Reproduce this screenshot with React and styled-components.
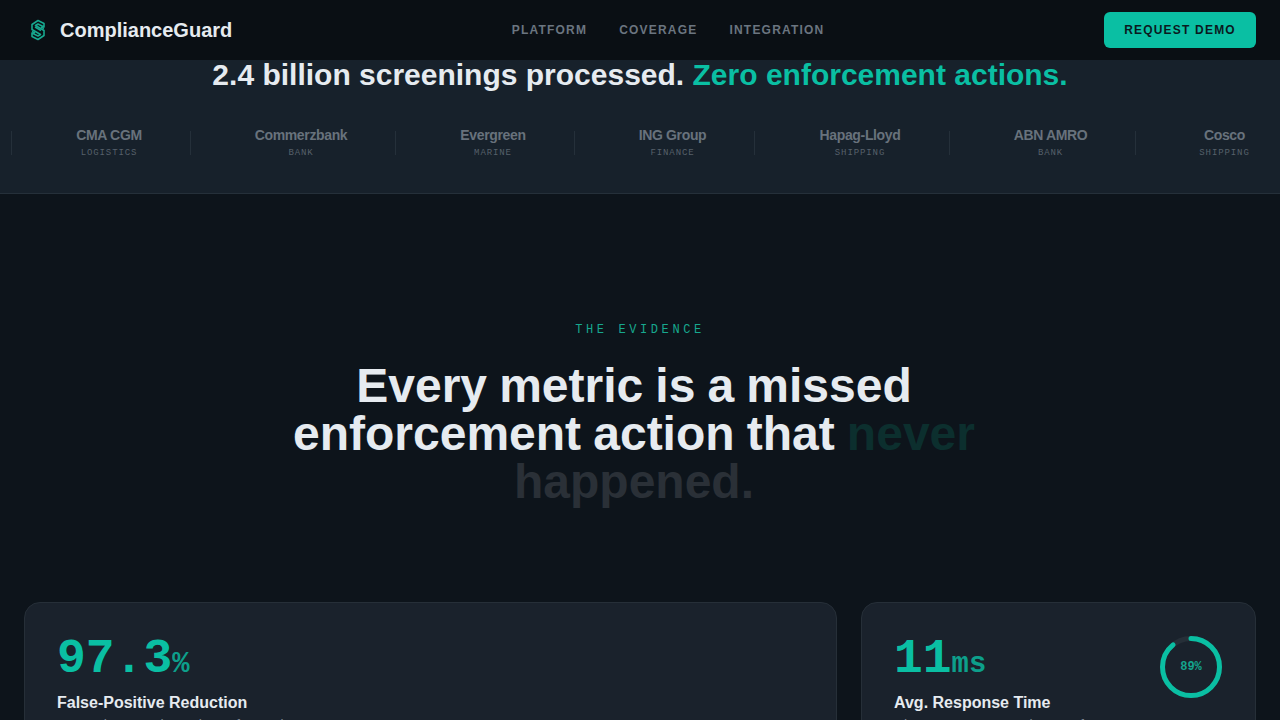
import React from "react";
import styled, { createGlobalStyle } from "styled-components";

const Global = createGlobalStyle`
  html, body { margin: 0; padding: 0; background: #0d141b; overflow: hidden; }
  body { font-family: "Liberation Sans", Arial, sans-serif; }
  * { box-sizing: border-box; }
`;
const Page = styled.div`
  width: 1280px; height: 720px; overflow: hidden; display: flex; flex-direction: column;
  background: #0d141b;
`;
const Nav = styled.header`
  flex: none; height: 60px; display: flex; justify-content: space-between; align-items: center;
  padding: 0 24px; background: #0a0f14;
`;
const Brand = styled.div`
  display: flex; align-items: center; gap: 12px; padding-left: 4px;
  font-size: 20px; font-weight: 700; color: #e6ebf0;
`;
const Links = styled.nav`
  display: flex; gap: 32px;
`;
const NavLink = styled.a`
  font-size: 12px; font-weight: 700; letter-spacing: 1.2px; color: #6b7580;
`;
const Demo = styled.button`
  height: 36px; width: 152px; border: 0; border-radius: 6px; background: #0abfa3;
  font: 700 12px "Liberation Sans", Arial, sans-serif; letter-spacing: 1.2px; color: #0a1a1f;
`;
const Band = styled.section`
  flex: none; height: 134px; background: #17212b; border-bottom: 1px solid #25303a;
  overflow: hidden;
`;
const BandTitle = styled.h2`
  margin: 0; font-size: 30px; line-height: 30px; font-weight: 700; text-align: center; color: #e6ebf0;
`;
const Accent = styled.span`
  color: #0abfa3;
`;
const Ticker = styled.div`
  display: flex; margin-top: 41px; padding-left: 11px;
`;
const Client = styled.div`
  flex: none; width: ${p => p.$w}px; height: 24px; padding-left: 16px;
  border-left: 1px solid #25303a;
  display: flex; flex-direction: column; align-items: center;
`;
const ClientName = styled.span`
  font-size: 14px; line-height: 17px; margin-top: -4px; font-weight: 700; letter-spacing: -0.35px; color: #68727c; white-space: nowrap;
`;
const ClientType = styled.span`
  font-family: "Liberation Mono", monospace; font-size: 9px; line-height: 10px; margin-top: 4px; letter-spacing: 0.9px; color: #56606a; white-space: nowrap;
`;
const Evidence = styled.section`
  flex: none; height: 408px; display: flex; flex-direction: column; align-items: center;
  padding-top: 129px;
`;
const Eyebrow = styled.div`
  font-family: "Liberation Mono", monospace; font-size: 12px; line-height: 14px; letter-spacing: 3.6px; color: #17a88f;
`;
const Heading = styled.h1`
  margin: 25px 12px 0 0; width: 700px; font-size: 48px; line-height: 48px; font-weight: 700; text-align: center;
  word-spacing: -1.2px; color: #e6ebf0;
`;
const Never = styled.span`
  color: #0c2f2e;
`;
const Happened = styled.span`
  color: #2a3037;
`;
const Cards = styled.div`
  flex: none; display: grid; grid-template-columns: 813px 395px; gap: 24px; padding: 0 24px;
`;
const Card = styled.article`
  position: relative; height: 200px; padding: 32px; border-radius: 16px; background: #1a222c;
  border: 1px solid #262f38;
`;
const Value = styled.div`
  font-family: "Liberation Mono", monospace; font-weight: 700; font-size: 48px; line-height: 48px; color: #0abfa3;
`;
const Unit = styled.span`
  font-size: 28.8px; font-weight: 700; opacity: 0.8;
`;
const CardTitle = styled.div`
  margin-top: 2px; font-size: 16px; line-height: 24px; font-weight: 700; color: #e6ebf0;
`;
const CardText = styled.div`
  font-size: 14px; line-height: 21px; color: #7d8792;
`;
const Ring = styled.div`
  position: absolute; top: 32px; right: 32px; width: 64px; height: 64px;
  display: flex; align-items: center; justify-content: center;
`;
const RingLabel = styled.span`
  font-family: "Liberation Mono", monospace; font-size: 12px; font-weight: 700; color: #14a48d;
`;
const RingSvg = styled.svg`
  position: absolute; inset: 0; transform: rotate(-90deg);
`;

const clients = [
  ["CMA CGM", "LOGISTICS", 179],
  ["Commerzbank", "BANK", 205],
  ["Evergreen", "MARINE", 179],
  ["ING Group", "FINANCE", 180],
  ["Hapag-Lloyd", "SHIPPING", 195],
  ["ABN AMRO", "BANK", 186],
  ["Cosco", "SHIPPING", 162],
];

const Logo = () => (
  <svg width="20" height="24" viewBox="0 0 20 24" fill="none" stroke="#17a88f" strokeWidth="1.6" strokeLinejoin="round">
    <path d="M4 6.5 10 2.5l6 3v3.5L10 6 7.5 7.5l8.5 5v5L10 21.5l-6-3V15l6 3 2.5-1.5L4 11.500z" />
    <path d="M7 9l6 3.500M7 15l-3-1.500M13 9l3 1.500" />
  </svg>
);

export default function App() {
  return (
    <Page>
      <Global />
      <Nav>
        <Brand><Logo />ComplianceGuard</Brand>
        <Links>
          <NavLink>PLATFORM</NavLink>
          <NavLink>COVERAGE</NavLink>
          <NavLink>INTEGRATION</NavLink>
        </Links>
        <Demo>REQUEST DEMO</Demo>
      </Nav>
      <Band>
        <BandTitle>2.4 billion screenings processed. <Accent>Zero enforcement actions.</Accent></BandTitle>
        <Ticker>
          {clients.map(([n, t, w]) => (
            <Client key={n} $w={w}>
              <ClientName>{n}</ClientName>
              <ClientType>{t}</ClientType>
            </Client>
          ))}
        </Ticker>
      </Band>
      <Evidence>
        <Eyebrow>THE EVIDENCE</Eyebrow>
        <Heading>Every metric is a missed enforcement action that <Never>never</Never> <Happened>happened.</Happened></Heading>
      </Evidence>
      <Cards>
        <Card>
          <Value>97.3<Unit>%</Unit></Value>
          <CardTitle>False-Positive Reduction</CardTitle>
          <CardText>Versus legacy rule engines of record</CardText>
        </Card>
        <Card>
          <Value>11<Unit>ms</Unit></Value>
          <CardTitle>Avg. Response Time</CardTitle>
          <CardText>Clearance on every wire transfer</CardText>
          <Ring>
            <RingSvg width="64" height="64" viewBox="0 0 64 64">
              <circle cx="32" cy="32" r="28.5" fill="none" stroke="#262f38" strokeWidth="5" />
              <circle cx="32" cy="32" r="28.5" fill="none" stroke="#0abfa3" strokeWidth="5" strokeLinecap="round" strokeDasharray="159.400 179.100" />
            </RingSvg>
            <RingLabel>89%</RingLabel>
          </Ring>
        </Card>
      </Cards>
    </Page>
  );
}
